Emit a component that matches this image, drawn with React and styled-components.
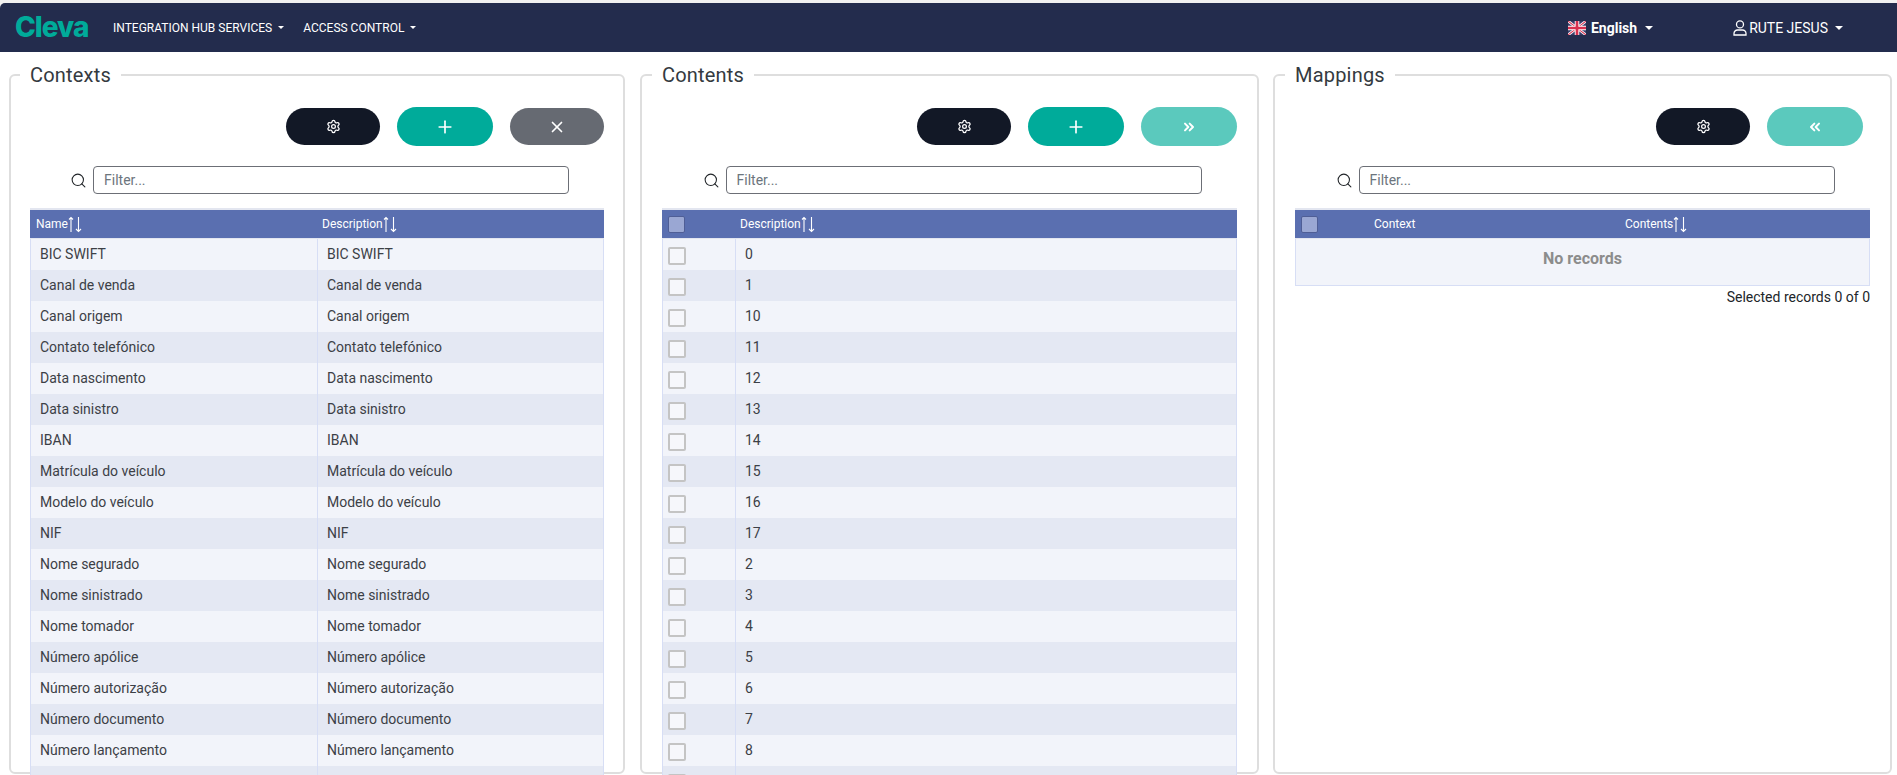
import React from "react";
import styled, { createGlobalStyle } from "styled-components";
import { Settings, Plus, X, ChevronsRight, ChevronsLeft, Search } from "lucide-react";

const GlobalStyle = createGlobalStyle`
    html, body {
        margin: 0;
        height: 775px;
        overflow: hidden;
        background: #ffffff;
        font-family: Roboto, "Liberation Sans", sans-serif;
    }
`
const Page = styled.div`
    height: 775px;
    overflow: hidden;
    padding-top: 3px;
    box-sizing: border-box;
    background: #f1f1f1;
`
const Navbar = styled.nav`
    height: 49px;
    display: flex;
    align-items: center;
    background: #232c4d;
    color: #ffffff;
    border-top-left-radius: 5px;
    padding: 0 54px 0 15px;
`
const Logo = styled.div`
    width: 98px;
    font-family: Inter, sans-serif;
    font-weight: 800;
    font-size: 28px;
    letter-spacing: -1px;
    color: #00ab9a;
    line-height: 49px;
`
const NavItem = styled.div`
    display: flex;
    align-items: center;
    font-size: 12px;
    font-weight: 400;
    margin-right: 19px;
`
const LangItem = styled.div`
    display: flex;
    align-items: center;
    gap: 5px;
    margin-left: auto;
    font-size: 14px;
    font-weight: 700;
`
const UserItem = styled.div`
    display: flex;
    align-items: center;
    gap: 2px;
    margin-left: 80px;
    font-size: 14px;
`
const UserName = styled.span`
    margin-right: 2px;
`
const Caret = styled.span`
    display: inline-block;
    margin-left: ${(p) => (p.$large ? "3px" : "6px")};
    border-top: ${(p) => (p.$large ? "4px" : "3px")} solid #ffffff;
    border-left: ${(p) => (p.$large ? "4px" : "3px")} solid transparent;
    border-right: ${(p) => (p.$large ? "4px" : "3px")} solid transparent;
`
const Columns = styled.main`
    display: grid;
    grid-template-columns: 616px 619px 618px;
    column-gap: 15px;
    padding: 11px 0 0 9px;
    background: #ffffff;
    height: 723px;
`
const Panel = styled.fieldset`
    margin: 0;
    padding: 0 20px;
    min-width: 0;
    height: 711px;
    box-sizing: border-box;
    border: 2px solid #dedede;
    border-radius: 6px;
    &:first-child {
        padding: 0 19px;
    }
    &:last-child {
        margin-left: -1px;
    }
`
const Legend = styled.legend`
    margin-left: -10px;
    padding: 0 10px;
    height: 24px;
    line-height: 24px;
    font-size: 20px;
    letter-spacing: 0.2px;
    font-weight: 400;
    color: #343a40;
`
const Toolbar = styled.div`
    display: flex;
    justify-content: flex-end;
    align-items: center;
    gap: 17px;
    margin-top: 20px;
    height: 39px;
    padding-right: ${(p) => (p.$inset ? "7px" : "0")};
`
const colors = { dark: "#121826", teal: "#00ab9a", gray: "#666a72", faded: "#5bc9bd" };
const PillButton = styled.button`
    display: flex;
    align-items: center;
    justify-content: center;
    padding: 0;
    border: none;
    color: #ffffff;
    background: ${(p) => colors[p.$kind]};
    width: ${(p) => (p.$kind === "teal" || p.$kind === "faded" ? "96px" : "94px")};
    height: ${(p) => (p.$kind === "teal" || p.$kind === "faded" ? "39px" : "37px")};
    border-radius: 20px;
`
const FilterRow = styled.div`
    display: flex;
    justify-content: center;
    align-items: center;
    gap: 6px;
    margin-top: 20px;
    padding-left: 5px;
    color: #212529;
`
const FilterInput = styled.input`
    width: 476px;
    height: 28px;
    box-sizing: border-box;
    padding: 0 10px;
    border: 1px solid #6c6f76;
    border-radius: 4px;
    font-family: inherit;
    font-size: 14px;
    outline: none;
    &::placeholder {
        color: #6c757d;
    }
`
const Table = styled.table`
    width: 100%;
    margin-top: 14px;
    border-collapse: separate;
    border-spacing: 0;
    table-layout: fixed;
    border-top: 2px solid #e3e6f0;
`
const Th = styled.th`
    height: 29px;
    padding: 0 0 0 5px;
    box-sizing: border-box;
    background: #5a6fb0;
    color: #ffffff;
    font-size: 12px;
    font-weight: 400;
    text-align: left;
    border-bottom: 1px solid #e3e6f0;
    width: ${(p) => p.$width || "auto"};
    &:first-child {
        padding-left: 6px;
    }
`
const HeadLabel = styled.span`
    display: inline-flex;
    align-items: center;
`
const Tr = styled.tr`
    background: ${(p) => (p.$odd ? "#e4e8f3" : "#f2f4fa")};
`
const Td = styled.td`
    height: 31px;
    padding: 0 0 2px 9px;
    box-sizing: border-box;
    font-size: 14px;
    color: #3c4046;
    border-left: 1px solid #d7def5;
    &:last-child {
        border-right: 1px solid #d7def5;
    }
`
const CheckCell = styled(Td)`
    padding: 0 0 0 5px;
`
const RowCheck = styled.span`
    display: block;
    width: 18px;
    height: 18px;
    margin-top: 2px;
    box-sizing: border-box;
    border: 2px solid #c4c4c4;
    border-radius: 2px;
    background: #f6f7fb;
`
const HeadCheck = styled.span`
    display: block;
    width: 17px;
    height: 17px;
    box-sizing: border-box;
    border: 1px solid #4f5e96;
    border-radius: 2px;
    background: #9aa7d3;
`
const EmptyCell = styled.td`
    height: 47px;
    box-sizing: border-box;
    padding-bottom: 8px;
    text-align: center;
    font-size: 16px;
    font-weight: 700;
    color: #8c8c8c;
    background: #f2f4fa;
    border: 1px solid #d7def5;
    border-top: none;
`
const Footer = styled.div`
    margin-top: 3px;
    text-align: right;
    font-size: 14px;
    line-height: 16px;
    color: #212529;
`

const SortIcon = () => (
    <svg width="15" height="17" viewBox="0 0 15 17" fill="none" stroke="#fff" strokeWidth="1.1">
        <path d="M3 16V1.5M1 3.5 3 1.5 5 3.5" />
        <path d="M10.5 1v14.5M8 13l2.5 2.5L13 13" />
    </svg>
);

const FlagIcon = () => (
    <svg width="18" height="14" viewBox="0 0 60 46">
        <rect width="60" height="46" fill="#3a3f6b" />
        <path d="M0 0 60 46M60 0 0 46" stroke="#fff" strokeWidth="9" />
        <path d="M0 0 60 46M60 0 0 46" stroke="#d8304f" strokeWidth="3.5" />
        <path d="M30 0v46M0 23h60" stroke="#fff" strokeWidth="15" />
        <path d="M30 0v46M0 23h60" stroke="#d8304f" strokeWidth="9" />
    </svg>
);

const UserIcon = () => (
    <svg width="14" height="16" viewBox="0 0 14 16" fill="none" stroke="#fff" strokeWidth="1.3">
        <circle cx="7" cy="4.4" r="3.5" />
        <path d="M1 15v-1.5A3.5 3.5 0 0 1 4.5 10h5a3.5 3.5 0 0 1 3.5 3.5V15z" />
    </svg>
);

// the last row only shows its top few pixels above the page edge
const contexts = ["BIC SWIFT", "Canal de venda", "Canal origem", "Contato telefónico", "Data nascimento", "Data sinistro", "IBAN", "Matrícula do veículo", "Modelo do veículo", "NIF", "Nome segurado", "Nome sinistrado", "Nome tomador", "Número apólice", "Número autorização", "Número documento", "Número lançamento", ""];
const contents = ["0", "1", "10", "11", "12", "13", "14", "15", "16", "17", "2", "3", "4", "5", "6", "7", "8", ""];

const Filter = () => (
    <FilterRow>
        <Search size={17} strokeWidth={1.5} />
        <FilterInput placeholder="Filter..." />
    </FilterRow>
);

const App = () => {
    return (
        <Page>
            <GlobalStyle />
            <Navbar>
                <Logo>Cleva</Logo>
                <NavItem>INTEGRATION HUB SERVICES<Caret /></NavItem>
                <NavItem>ACCESS CONTROL<Caret /></NavItem>
                <LangItem><FlagIcon /><span>English</span><Caret $large /></LangItem>
                <UserItem><UserIcon /><UserName>RUTE JESUS</UserName><Caret $large /></UserItem>
            </Navbar>
            <Columns>
                <Panel>
                    <Legend>Contexts</Legend>
                    <Toolbar>
                        <PillButton $kind="dark"><Settings size={15} /></PillButton>
                        <PillButton $kind="teal"><Plus size={20} strokeWidth={2} /></PillButton>
                        <PillButton $kind="gray"><X size={18} strokeWidth={2.25} /></PillButton>
                    </Toolbar>
                    <Filter />
                    <Table>
                        <thead>
                            <tr>
                                <Th $width="50%"><HeadLabel>Name<SortIcon /></HeadLabel></Th>
                                <Th><HeadLabel>Description<SortIcon /></HeadLabel></Th>
                            </tr>
                        </thead>
                        <tbody>
                            {contexts.map((name, i) => (
                                <Tr key={i} $odd={i % 2 === 1}>
                                    <Td>{name}</Td>
                                    <Td>{name}</Td>
                                </Tr>
                            ))}
                        </tbody>
                    </Table>
                </Panel>
                <Panel>
                    <Legend>Contents</Legend>
                    <Toolbar>
                        <PillButton $kind="dark"><Settings size={15} /></PillButton>
                        <PillButton $kind="teal"><Plus size={20} strokeWidth={2} /></PillButton>
                        <PillButton $kind="faded"><ChevronsRight size={16} strokeWidth={3} /></PillButton>
                    </Toolbar>
                    <Filter />
                    <Table>
                        <thead>
                            <tr>
                                <Th $width="73px"><HeadCheck /></Th>
                                <Th><HeadLabel>Description<SortIcon /></HeadLabel></Th>
                            </tr>
                        </thead>
                        <tbody>
                            {contents.map((value, i) => (
                                <Tr key={i} $odd={i % 2 === 1}>
                                    <CheckCell><RowCheck /></CheckCell>
                                    <Td>{value}</Td>
                                </Tr>
                            ))}
                        </tbody>
                    </Table>
                </Panel>
                <Panel>
                    <Legend>Mappings</Legend>
                    <Toolbar $inset>
                        <PillButton $kind="dark"><Settings size={15} /></PillButton>
                        <PillButton $kind="faded"><ChevronsLeft size={16} strokeWidth={3} /></PillButton>
                    </Toolbar>
                    <Filter />
                    <Table>
                        <thead>
                            <tr>
                                <Th $width="74px"><HeadCheck /></Th>
                                <Th $width="251px">Context</Th>
                                <Th><HeadLabel>Contents<SortIcon /></HeadLabel></Th>
                            </tr>
                        </thead>
                        <tbody>
                            <tr><EmptyCell colSpan={3}>No records</EmptyCell></tr>
                        </tbody>
                    </Table>
                    <Footer>Selected records 0 of 0</Footer>
                </Panel>
            </Columns>
        </Page>
    );
};

export default App;
